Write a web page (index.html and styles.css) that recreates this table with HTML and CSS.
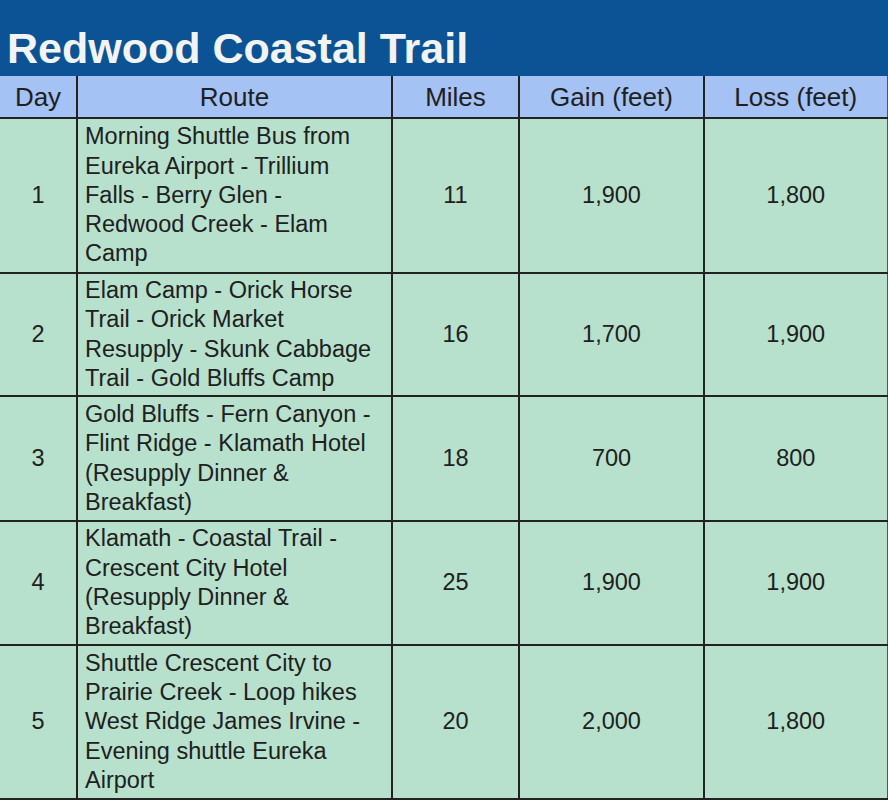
FILE: index.html
```html
<!DOCTYPE html>
<html>
<head>
<meta charset="utf-8">
<link rel="stylesheet" href="styles.css">
</head>
<body>
<div class="sheet">
  <div class="title">Redwood Coastal Trail</div>
  <table class="trail">
    <colgroup>
      <col class="c-day"><col class="c-route"><col class="c-miles"><col class="c-gain"><col class="c-loss">
    </colgroup>
    <thead>
      <tr><th>Day</th><th>Route</th><th>Miles</th><th>Gain (feet)</th><th>Loss (feet)</th></tr>
    </thead>
    <tbody>
      <tr class="h1"><td>1</td><td class="route">Morning Shuttle Bus from Eureka Airport - Trillium Falls - Berry Glen - Redwood Creek - Elam Camp</td><td>11</td><td>1,900</td><td>1,800</td></tr>
      <tr class="h2"><td>2</td><td class="route">Elam Camp - Orick Horse Trail - Orick Market Resupply - Skunk Cabbage Trail - Gold Bluffs Camp</td><td>16</td><td>1,700</td><td>1,900</td></tr>
      <tr class="h3"><td>3</td><td class="route">Gold Bluffs - Fern Canyon - Flint Ridge - Klamath Hotel (Resupply Dinner &amp; Breakfast)</td><td>18</td><td>700</td><td>800</td></tr>
      <tr class="h4"><td>4</td><td class="route">Klamath - Coastal Trail - Crescent City Hotel (Resupply Dinner &amp; Breakfast)</td><td>25</td><td>1,900</td><td>1,900</td></tr>
      <tr class="h5"><td>5</td><td class="route">Shuttle Crescent City to Prairie Creek - Loop hikes West Ridge James Irvine - Evening shuttle Eureka Airport</td><td>20</td><td>2,000</td><td>1,800</td></tr>
    </tbody>
  </table>
</div>
</body>
</html>
```
FILE: styles.css
```css
html, body {
  margin: 0;
  padding: 0;
  background: #ffffff;
}
.sheet {
  width: 888px;
  height: 800px;
  overflow: hidden;
  font-family: "Liberation Sans", Arial, sans-serif;
}
.title {
  height: 76px;
  box-sizing: border-box;
  background: #0b5394;
  color: #f3f3f3;
  font-weight: bold;
  font-size: 43px;
  line-height: 43px;
  padding: 27px 0 0 7px;
  white-space: nowrap;
}
.trail {
  border-collapse: collapse;
  table-layout: fixed;
  width: 887px;
  color: #202020;
}
.c-day { width: 77px; }
.c-route { width: 315px; }
.c-miles { width: 127px; }
.c-gain { width: 185px; }
.c-loss { width: 183px; }
.trail th, .trail td {
  border: 2px solid #222222;
  text-align: center;
  vertical-align: middle;
  padding: 0 4px;
}
.trail tr > :first-child { border-left: none; }
.trail tr > :last-child { border-right: 1px solid #555555; }
.trail thead tr:first-child th { border-top: none; }
.trail th {
  background: #a4c2f4;
  font-weight: normal;
  font-size: 26px;
  height: 41px;
  line-height: 30px;
  padding-top: 0;
  padding-bottom: 0;
}
.trail td {
  background: #b7e1cd;
  font-size: 23.5px;
  line-height: 29.3px;
}
.trail td.route {
  text-align: left;
  padding: 1px 12px 1px 7px;
}
.h1 td { height: 151px; }
.h2 td { height: 119px; }
.h3 td { height: 121px; }
.h4 td { height: 120px; }
.h5 td { height: 150px; }
```
